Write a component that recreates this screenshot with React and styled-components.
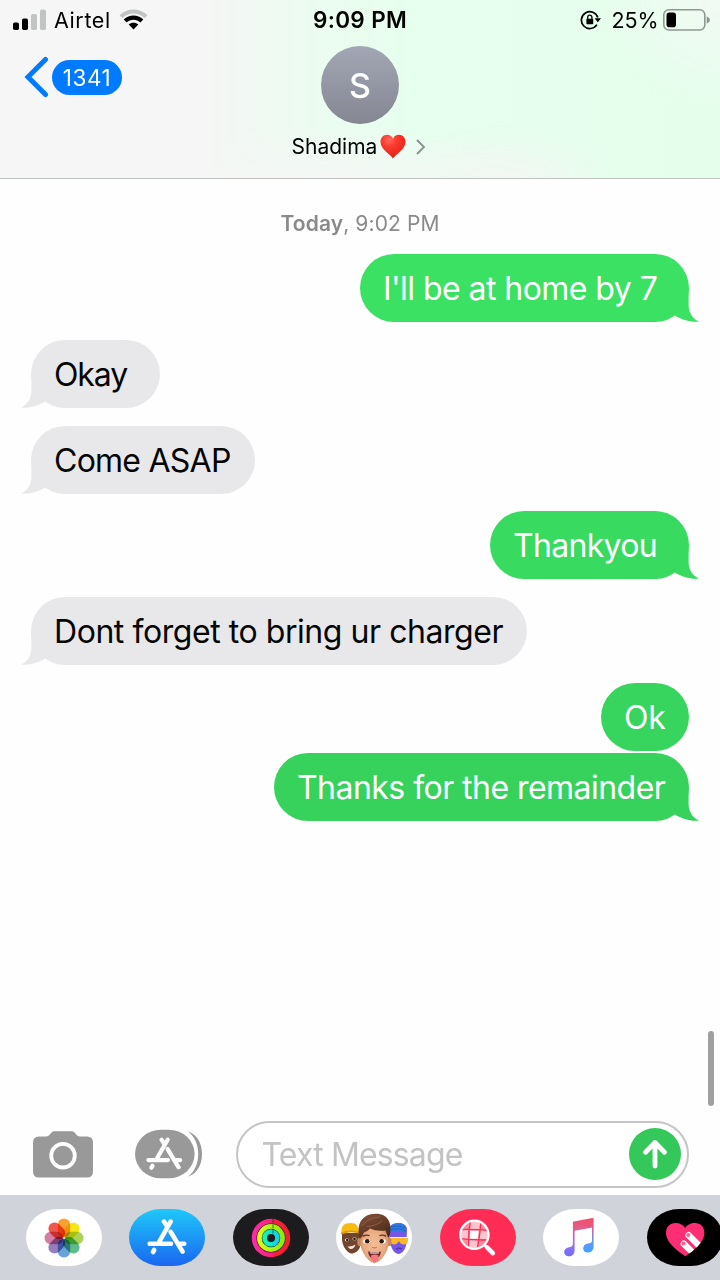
import React from "react";
import styled, { createGlobalStyle } from "styled-components";

const GlobalStyle = createGlobalStyle`
  * { box-sizing: border-box; }
  body {
    margin: 0;
    background: #fff;
    font-family: Inter, "Liberation Sans", sans-serif;
    color: #000;
  }
  svg { display: block; flex: none; }
`;

const Screen = styled.div`
  position: relative;
  display: flex;
  flex-direction: column;
  width: 720px;
  height: 1280px;
  overflow: hidden;
  background: #fefefe;
`;

const Header = styled.header`
  height: 179px;
  flex: none;
  border-bottom: 1px solid #c0c2c1;
  background:
    radial-gradient(ellipse 120px 55px at 500px 180px, rgba(243, 247, 243, 0.9) 15%, rgba(243, 247, 243, 0) 100%),
    radial-gradient(ellipse 120px 110px at 720px 0, rgba(242, 250, 244, 0.9) 10%, rgba(242, 250, 244, 0) 100%),
    radial-gradient(ellipse 240px 60px at 320px 185px, rgba(245, 247, 245, 1) 10%, rgba(245, 247, 245, 0) 100%),
    linear-gradient(90deg, #f6f6f6 0, #f5f6f5 210px, #edfbf1 300px, #e6ffee 420px, #e5feec 720px);
`;

const StatusBar = styled.div`
  display: grid;
  grid-template-columns: 1fr auto 1fr;
  align-items: center;
  height: 40px;
  padding: 0 10px 0 13px;
`;

const StatusSide = styled.div`
  display: flex;
  align-items: center;
  justify-content: ${(p) => (p.$end ? "flex-end" : "flex-start")};
`;

const StatusText = styled.span`
  font-size: ${(p) => p.$size || 21.5}px;
  line-height: 26px;
  white-space: nowrap;
  font-weight: ${(p) => p.$weight || 400};
  letter-spacing: ${(p) => p.$track || 0}px;
  margin: ${(p) => p.$margin || 0};
`;

const NavBar = styled.div`
  display: grid;
  grid-template-columns: 240px 240px 240px;
  height: 138px;
`;

const BackButton = styled.div`
  display: flex;
  align-items: center;
  gap: 3px;
  height: 42px;
  margin-top: 16px;
  padding-left: 24px;
`;

const Badge = styled.span`
  display: flex;
  align-items: center;
  justify-content: center;
  width: 70px;
  height: 35px;
  border-radius: 18px;
  background: #007aff;
  color: #fff;
  font-size: 22.5px;
  letter-spacing: 0.6px;
`;

const Contact = styled.div`
  display: flex;
  flex-direction: column;
  align-items: center;
  padding-top: 6px;
`;

const Avatar = styled.div`
  display: flex;
  align-items: center;
  justify-content: center;
  width: 78px;
  height: 78px;
  border-radius: 50%;
  background: linear-gradient(#a3a7b5, #848792);
  color: #fff;
  font-size: 34px;
  font-weight: 500;
  padding-top: 1px;
`;

const ContactName = styled.div`
  display: flex;
  align-items: center;
  height: 26px;
  margin-top: 9px;
  padding-right: 2px;
  font-size: 21px;
  white-space: nowrap;
`;

const NameText = styled.span`
  margin-right: 3px;
`;

const Thread = styled.main`
  display: flex;
  flex-direction: column;
  flex: 1;
  padding: 31px 31px 0;
`;

const DateLine = styled.div`
  align-self: center;
  height: 28px;
  line-height: 28px;
  margin-bottom: 16px;
  font-size: 21px;
  color: #8a8a8d;
  letter-spacing: ${(p) => p.$track}px;
  white-space: nowrap;
  b { font-weight: 600; }
`;

const Bubble = styled.div`
  position: relative;
  flex: none;
  align-self: ${(p) => (p.$out ? "flex-end" : "flex-start")};
  width: ${(p) => p.$width}px;
  height: 68px;
  margin-bottom: ${(p) => (p.$tight ? 2.3 : 17.75)}px;
  padding-left: 23px;
  border-radius: 34px;
  background: ${(p) => p.$fill};
  color: ${(p) => (p.$out ? "#fff" : "#050505")};
  font-size: 32px;
  line-height: 69px;
  white-space: nowrap;
  letter-spacing: ${(p) => p.$track}px;
`;

const Tail = styled.svg`
  position: absolute;
  bottom: 0;
  right: ${(p) => (p.$out ? "-10px" : "auto")};
  left: ${(p) => (p.$out ? "auto" : "-10px")};
  transform: ${(p) => (p.$out ? "none" : "scaleX(-1)")};
`;

const ScrollThumb = styled.div`
  position: absolute;
  top: 1031px;
  right: 6px;
  width: 6px;
  height: 75px;
  border-radius: 3px;
  background: #a0a0a0;
`;

const Composer = styled.div`
  display: flex;
  align-items: center;
  height: 82px;
  flex: none;
  padding: 0 31px 0 33px;
`;

const DrawerButton = styled.div`
  margin-left: 42px;
`;

const Field = styled.div`
  display: flex;
  align-items: center;
  justify-content: space-between;
  flex: none;
  width: 453px;
  height: 67px;
  margin-left: 33px;
  padding: 0 6px 0 23.5px;
  border: 2px solid #c5c5c7;
  border-radius: 34px;
  background: #fff;
`;

const Placeholder = styled.span`
  padding-top: 1px;
  font-size: 32px;
  color: #c3c3c5;
  letter-spacing: ${(p) => p.$track}px;
  white-space: nowrap;
`;

const SendButton = styled.div`
  display: flex;
  align-items: center;
  justify-content: center;
  width: 52.5px;
  height: 52.5px;
  border-radius: 50%;
  background: #34c759;
`;

const AppStrip = styled.footer`
  display: flex;
  gap: 27.6px;
  height: 85px;
  flex: none;
  padding: 14px 0 0 25.5px;
  background: #d0d3da;
`;

const AppPill = styled.div`
  display: flex;
  align-items: center;
  justify-content: center;
  flex: none;
  width: 76px;
  height: 57px;
  border-radius: 32px / 28.5px;
  overflow: hidden;
  background: ${(p) => p.$fill};
`;

const messages = [
  { text: "I'll be at home by 7", out: true, fill: "#3be162", width: 329, track: -0.55, tail: true },
  { text: "Okay", fill: "#e8e8ea", width: 129, track: -1.1, tail: true },
  { text: "Come ASAP", fill: "#e8e8ea", width: 224, track: -0.75, tail: true },
  { text: "Thankyou", out: true, fill: "#38da60", width: 199, track: -0.7, tail: true },
  { text: "Dont forget to bring ur charger", fill: "#e8e8ea", width: 496, track: -0.44, tail: true },
  { text: "Ok", out: true, fill: "#37d55d", width: 88, track: -0.3, tight: true },
  { text: "Thanks for the remainder", out: true, fill: "#36d25c", width: 415, track: -0.54, tail: true },
];

const Signal = () => (
  <svg width="34" height="22" viewBox="0 0 34 22">
    <rect x="0" y="13.5" width="6" height="7.5" rx="1.8" />
    <rect x="9" y="9.5" width="6" height="11.5" rx="1.8" />
    <rect x="18" y="5" width="6" height="16" rx="1.8" fill="#c2c3c3" />
    <rect x="27" y="0.5" width="6" height="20.5" rx="1.8" fill="#c2c3c3" />
  </svg>
);

const Wifi = () => (
  <svg width="29" height="22" viewBox="0 0 29 22">
    <path d="M0.5 6.2C8.3 -1.5 20.7 -1.5 28.5 6.2L25.6 9.1C19.4 3 9.6 3 3.4 9.1Z" fill="#c2c3c3" />
    <path d="M4.7 10.6C10.2 5.2 18.8 5.2 24.3 10.6L21.3 13.6C17.5 9.9 11.5 9.9 7.7 13.6Z" />
    <path d="M9.7 15.6C12.4 13 16.6 13 19.3 15.6L14.5 20.6Z" />
  </svg>
);

const RotationLock = () => (
  <svg width="21" height="20" viewBox="0 0 21 20">
    <path d="M16.9 14.6A8.4 8.4 0 1 1 17.8 7.6" fill="none" stroke="#000" strokeWidth="1.7" />
    <path d="M14.6 8.2H21L17.8 12.2Z" />
    <rect x="6.4" y="8.8" width="6.8" height="5.4" rx="0.8" />
    <path d="M7.7 9.1V7.2a2.1 2.1 0 0 1 4.2 0V9.1" fill="none" stroke="#000" strokeWidth="1.3" />
  </svg>
);

const Battery = () => (
  <svg width="47" height="22" viewBox="0 0 47 22">
    <rect x="0.8" y="0.8" width="41" height="20.2" rx="5" fill="none" stroke="#8d9990" strokeWidth="1.6" />
    <rect x="3.5" y="3.6" width="9.5" height="14.6" rx="2.8" />
    <path d="M43.7 7.2Q47 8.7 47 11Q47 13.3 43.7 14.8Z" fill="#8d9990" />
  </svg>
);

const Heart = () => (
  <svg width="26" height="25" viewBox="0 0 26 25">
    <defs>
      <radialGradient id="heart" cx="0.35" cy="0.22" r="0.85">
        <stop offset="0" stopColor="#ff6a5c" />
        <stop offset="0.35" stopColor="#fa3a2e" />
        <stop offset="0.8" stopColor="#ec241b" />
        <stop offset="1" stopColor="#c51712" />
      </radialGradient>
    </defs>
    <path d="M13 24.5C10 20 0.5 15.5 0.5 7.8C0.5 3.5 3.5 0.7 7.1 0.7C9.8 0.7 12 2.2 13 4.8C14 2.2 16.2 0.7 18.9 0.7C22.5 0.7 25.5 3.5 25.5 7.8C25.5 15.5 16 20 13 24.5Z" fill="url(#heart)" />
  </svg>
);

const Camera = () => (
  <svg width="60" height="48" viewBox="0 0 60 48">
    <path d="M6 6.5H13C15 6.5 16 5.5 17.4 3.8C18.9 1.7 20 1.2 22 1.2H38C40 1.2 41.1 1.7 42.6 3.8C44 5.5 45 6.5 47 6.5H54Q60 6.5 60 12.5V41.5Q60 47.5 54 47.5H6Q0 47.5 0 41.5V12.5Q0 6.5 6 6.5Z" fill="#999" />
    <circle cx="30" cy="25.7" r="11.8" fill="none" stroke="#fff" strokeWidth="3.8" />
  </svg>
);

const StoreStrokes = () => (
  <g fill="none" stroke="#fff" strokeWidth="4.6" strokeLinecap="round">
    <path d="M2.7 24.7H24" />
    <path d="M32.8 24.7H37.2" />
    <path d="M23.6 2.6L12.2 22.8" />
    <path d="M17 2.6L20 7.2" />
    <path d="M23.6 12.8L35.6 32.6" />
    <path d="M7.2 31L6 33" />
  </g>
);

const StoreDrawer = () => (
  <svg width="68" height="50" viewBox="0 0 68 50">
    <path d="M53 2.2C62 5.5 67 14 67 25C67 36 62 44.5 53 47.8C60 42 63.2 34.5 63.2 25C63.2 15.5 60 8 53 2.2Z" fill="#999" />
    <rect x="0" y="0.7" width="59.6" height="48.6" rx="26" ry="24.3" fill="#999" />
    <g transform="translate(10.9 8.3) scale(0.92)"><StoreStrokes /></g>
  </svg>
);

const petals = ["#f79a1e", "#f2e600", "#a5d04a", "#4fb582", "#5a9bd8", "#8f72b8", "#cf749b", "#f0483e"];

const Petal = styled.rect`
  mix-blend-mode: multiply;
`;

const Photos = () => (
  <svg width="40" height="40" viewBox="-20 -20 40 40">
    {petals.map((c, i) => (
      <Petal key={c} x="-6.2" y="-19.5" width="12.4" height="18.7" rx="6.2" fill={c} opacity="0.92" transform={`rotate(${i * 45})`} />
    ))}
  </svg>
);

const Rings = () => (
  <svg width="40" height="40" viewBox="-20 -20 40 40">
    <defs>
      <linearGradient id="ringA"><stop offset="0" stopColor="#fa2ca5" /><stop offset="0.57" stopColor="#fb2170" /><stop offset="0.58" stopColor="#f4203e" /><stop offset="1" stopColor="#f4202e" /></linearGradient>
      <linearGradient id="ringB"><stop offset="0" stopColor="#d8fb16" /><stop offset="1" stopColor="#88ed10" /></linearGradient>
      <linearGradient id="ringC"><stop offset="0" stopColor="#15f5b7" /><stop offset="1" stopColor="#15cfee" /></linearGradient>
    </defs>
    <g fill="none" strokeWidth="4.7">
      <circle r="16.9" stroke="url(#ringA)" />
      <circle r="11.6" stroke="url(#ringB)" />
      <circle r="6.4" stroke="url(#ringC)" />
    </g>
    <path d="M2 -19V-14.5M2 -13.5V-9.5M2 -8.3V-4.5" stroke="#1c1c1e" strokeWidth="1.2" opacity="0.5" />
  </svg>
);

const Memoji = () => (
  <svg width="76" height="57" viewBox="0 0 76 57">
    <defs>
      <radialGradient id="skin" cx="0.5" cy="0.5" r="0.6">
        <stop offset="0" stopColor="#f3bd96" />
        <stop offset="0.65" stopColor="#e8aa82" />
        <stop offset="1" stopColor="#c27d55" />
      </radialGradient>
      <linearGradient id="hair" x1="0" y1="0" x2="0.6" y2="1">
        <stop offset="0" stopColor="#87553c" />
        <stop offset="1" stopColor="#4b2917" />
      </linearGradient>
    </defs>
    <path d="M6 24H24V38C22 43 18 44.5 15 44.5C10 43 6 36 6 30Z" fill="#70452c" />
    <path d="M5.5 25C4.5 17 8 14 15 14C20 14 23 17 23 24C16 21 11 24 5.5 25Z" fill="#f6bd10" />
    <path d="M5 24.5Q14 20.5 24 24" fill="none" stroke="#dc9a05" strokeWidth="1.6" />
    <ellipse cx="11" cy="31" rx="2" ry="1.4" fill="#fff" /><circle cx="11.3" cy="31" r="1.3" fill="#27130b" />
    <ellipse cx="18.5" cy="30" rx="2" ry="1.4" fill="#fff" /><circle cx="18.5" cy="30" r="1.3" fill="#27130b" />
    <path d="M11.5 37.5Q16 38 19.5 35.5Q18 40.5 14 40Z" fill="#f5e5dc" />
    <path d="M54 18C56 13 70 12 71 20L70.5 34C69.5 41 66 45 62 45C57 44 54 37 54 30Z" fill="#7656e5" />
    <path d="M54 18C57 13 69 13 70 19V24Q62 21 54 23Z" fill="#2d7be5" />
    <path d="M55 18Q64 16 69.5 19M54 21Q63 18 70 22" stroke="#225ab9" strokeWidth="0.8" fill="none" />
    <path d="M54 28.5H72V31.5Q71.5 35.5 68 35.5Q64.5 35.5 63 32Q61 35.5 57.5 35.5L54 34Z" fill="#ffb729" />
    <path d="M54 28.5H72" stroke="#fff0a0" strokeWidth="1" />
    <path d="M60 40Q63 38.6 66 40" stroke="#5137b9" strokeWidth="1.4" fill="none" />
    <ellipse cx="23.5" cy="33" rx="2.3" ry="4.2" fill="#c9865e" />
    <ellipse cx="53.2" cy="33" rx="2.3" ry="4.2" fill="#c9865e" />
    <path d="M24.5 23C25 14 51.5 13 52.5 24V34C52.5 42 45 53.5 38.5 54C32 53.5 24.5 42 24.5 34Z" fill="url(#skin)" />
    <path d="M23.8 30C20 16 25 5 39.5 4.7C53 4.7 57 15 53.2 29.5L51.5 27L49.5 21.5Q40 22.5 34 19.5Q31 23 27.8 23.5L26.5 27Z" fill="url(#hair)" />
    <path d="M26 17Q32 8 44 8M31 17.5Q40 17 46 12" fill="none" stroke="#935f45" strokeWidth="1" />
    <ellipse cx="30.6" cy="32.3" rx="3.6" ry="2.4" fill="#fff" /><circle cx="31.2" cy="32.2" r="2.3" fill="#2a1a12" />
    <ellipse cx="46.2" cy="32.3" rx="3.6" ry="2.4" fill="#fff" /><circle cx="45.6" cy="32.2" r="2.3" fill="#2a1a12" />
    <path d="M27 27.4Q30 25.4 33.5 26.6M43.5 26.6Q47 25.4 50 27.4" fill="none" stroke="#5b3521" strokeWidth="1.3" />
    <path d="M36.2 38.2Q38.5 39.5 40.8 38.2" fill="none" stroke="#c07a54" strokeWidth="1.2" />
    <path d="M32 42.4Q38.5 43.8 45 42.4Q44 49.5 38.5 50Q33 49.5 32 42.4Z" fill="#702429" />
    <path d="M34 43.2Q38.5 44 43 43.2L42.6 44.4H34.4Z" fill="#fff" />
    <path d="M35 46.5Q39 44.5 42.5 46.5L42 50.5Q38.5 56 35.5 50.5Z" fill="#f3777c" />
  </svg>
);

const ImageSearch = () => (
  <svg width="76" height="57" viewBox="0 0 76 57">
    <defs><clipPath id="lens"><circle cx="34.4" cy="25.8" r="13.2" /></clipPath></defs>
    <g clipPath="url(#lens)">
      <rect x="20" y="11" width="30" height="30" fill="#ff8a9e" />
      <path d="M30.5 11H40.5L39.5 20H29ZM20 21H28V30H20ZM40 21H50V30H39ZM28.5 31H37.5V41H28.5Z" fill="#ffc5cd" />
      <path d="M30.3 21.8H38.8L37.8 29.8H29.6Z" fill="#fff" />
      <path d="M31 10Q27.5 25 29 41M41 10Q40.5 25 37 41M20 20.8Q34 19.5 50 21.8M20 29.5Q34 31.5 50 30.8" stroke="#ff2d55" strokeWidth="1.3" fill="none" />
    </g>
    <circle cx="34.4" cy="25.8" r="14.1" fill="none" stroke="#fff" strokeWidth="2.3" />
    <path d="M44.6 36L46.5 38" stroke="#fff" strokeWidth="3" />
    <path d="M47.2 38.5L52.8 44.2" stroke="#fff" strokeWidth="4.6" strokeLinecap="round" />
  </svg>
);

const Music = () => (
  <svg width="76" height="57" viewBox="0 0 76 57">
    <defs>
      <linearGradient id="note" gradientUnits="userSpaceOnUse" x1="44" y1="9" x2="42" y2="48">
        <stop offset="0" stopColor="#f34f68" /><stop offset="0.3" stopColor="#df5d91" /><stop offset="0.65" stopColor="#9b71f2" /><stop offset="1" stopColor="#6e70ff" />
      </linearGradient>
      <linearGradient id="noteRight" gradientUnits="userSpaceOnUse" x1="48" y1="18" x2="48" y2="44">
        <stop offset="0" stopColor="#df5d91" /><stop offset="0.5" stopColor="#6d90f4" /><stop offset="1" stopColor="#3ba6ff" />
      </linearGradient>
    </defs>
    <path d="M29.9 13.5Q29.9 12.7 30.8 12.5L49.4 9Q50.6 8.9 50.6 10V18.3L31.6 21.8V41.2C31.6 45.3 29 47.3 25.8 47.3C22.9 47.3 21.2 45.5 21.2 43.1C21.2 39.9 24 38.3 27.4 37.9Q29.9 37.6 29.9 35Z" fill="url(#note)" />
    <path d="M50.6 17.5V37.6C50.6 41.5 48 43.6 44.8 43.6C41.9 43.6 40.2 41.8 40.2 39.5C40.2 36.3 42.9 34.6 46.2 34.2Q49 33.9 49 31.4V17.5Z" fill="url(#noteRight)" />
  </svg>
);

const Touch = () => (
  <svg width="76" height="57" viewBox="0 0 76 57">
    <defs><clipPath id="touchHeart"><path d="M38.3 47.3C35 44.5 19 35.5 19 23.8C19 17.8 23 14 28.3 14C32.8 14 36.5 16 38.2 19C39.9 16 43.6 14 48 14C53.5 14 57.4 17.8 57.4 23.8C57.4 35.5 42 44.5 38.3 47.3Z" /></clipPath></defs>
    <g clipPath="url(#touchHeart)">
      <rect width="76" height="57" fill="#ff2d73" />
      <g stroke="#fff" strokeWidth="6.4" strokeLinecap="round">
        <path d="M41.6 26.2L60 44.5" /><path d="M36.8 34.7L51 49" />
      </g>
      <path d="M47 31.5L55 39.5M42 40L49 47" stroke="#ffdbe5" strokeWidth="0.8" />
      <circle cx="41.3" cy="26" r="2" fill="#ff5d8e" /><circle cx="36.4" cy="34.5" r="2" fill="#ff5d8e" />
    </g>
  </svg>
);

export default function App() {
  return (
    <Screen>
      <GlobalStyle />
      <Header>
        <StatusBar>
          <StatusSide>
            <Signal />
            <StatusText $margin="0 8px 0 7px" $track={0.6}>Airtel</StatusText>
            <Wifi />
          </StatusSide>
          <StatusText $weight={600} $size={22.5} $track={0.35} $margin="0 3px 0 0">9:09 PM</StatusText>
          <StatusSide $end>
            <RotationLock />
            <StatusText $margin="0 4.5px 0 11px" $track={-0.1}>25%</StatusText>
            <Battery />
          </StatusSide>
        </StatusBar>
        <NavBar>
          <BackButton>
            <svg width="25" height="42" viewBox="0 0 25 42">
              <path d="M21.5 3.5L4 21L21.5 38.5" fill="none" stroke="#007aff" strokeWidth="5" strokeLinecap="round" strokeLinejoin="miter" />
            </svg>
            <Badge>1341</Badge>
          </BackButton>
          <Contact>
            <Avatar>S</Avatar>
            <ContactName>
              <NameText>Shadima</NameText>
              <Heart />
              <svg width="20" height="18" viewBox="0 0 20 18">
                <path d="M11 3L18 10L11 17" fill="none" stroke="#8b908d" strokeWidth="1.8" />
              </svg>
            </ContactName>
          </Contact>
        </NavBar>
      </Header>
      <Thread>
        <DateLine $track={0.1}><b>Today</b>, 9:02 PM</DateLine>
        {messages.map((m) => (
          <Bubble key={m.text} $out={m.out} $fill={m.fill} $width={m.width} $track={m.track} $tight={m.tight}>
            {m.text}
            {m.tail && (
              <Tail $out={m.out} width="40" height="40" viewBox="-30 -40 40 40">
                <path d="M-14 -6.5V-34H-0.4V-17C-0.4 -10.5 2.8 -3.6 10 -0.4C2 0.5 -7 -2 -14 -6.5Z" fill={m.fill} />
              </Tail>
            )}
          </Bubble>
        ))}
      </Thread>
      <ScrollThumb />
      <Composer>
        <Camera />
        <DrawerButton><StoreDrawer /></DrawerButton>
        <Field>
          <Placeholder $track={-0.85}>Text Message</Placeholder>
          <SendButton>
            <svg width="26" height="30" viewBox="0 0 26 30">
              <path d="M13 27V3.5M3.5 13.2L13 3.5L22.5 13.2" fill="none" stroke="#fff" strokeWidth="4.8" strokeLinecap="round" strokeLinejoin="round" />
            </svg>
          </SendButton>
        </Field>
      </Composer>
      <AppStrip>
        <AppPill $fill="#fff"><Photos /></AppPill>
        <AppPill $fill="linear-gradient(#1fc8fa, #1a66f0)">
          <svg width="40" height="37" viewBox="0 0 40 37"><StoreStrokes /></svg>
        </AppPill>
        <AppPill $fill="#1c1c1e"><Rings /></AppPill>
        <AppPill $fill="#fff"><Memoji /></AppPill>
        <AppPill $fill="#ff2d55"><ImageSearch /></AppPill>
        <AppPill $fill="#fff"><Music /></AppPill>
        <AppPill $fill="#000"><Touch /></AppPill>
      </AppStrip>
    </Screen>
  );
}
